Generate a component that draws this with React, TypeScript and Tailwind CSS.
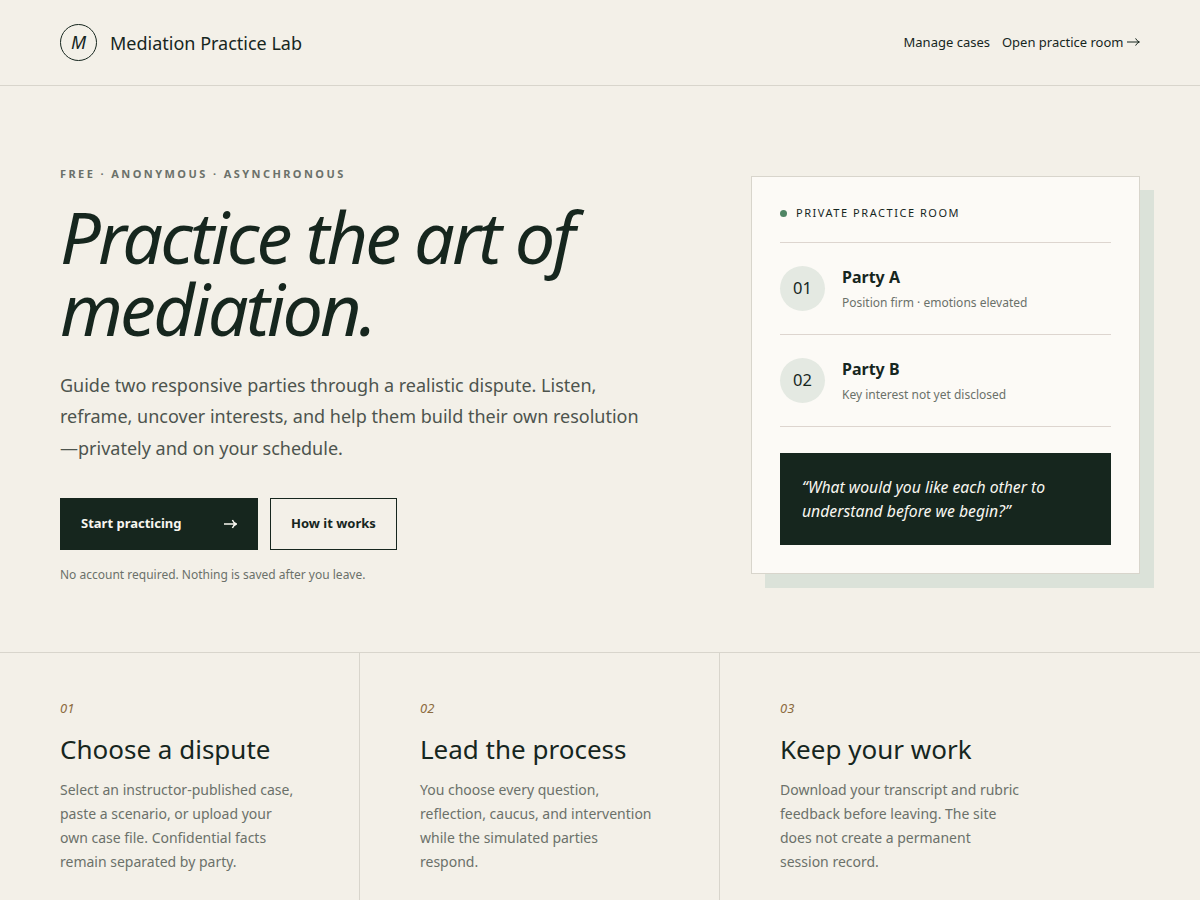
import React from "react";

const font = { fontFamily: '"Noto Sans", sans-serif' };

function NavArrow() {
  return (
    <svg width="13" height="10" viewBox="0 0 13 10" fill="none" stroke="currentColor" strokeWidth="1" className="inline-block ml-[3.5px] align-[-0.5px]">
      <path d="M0 5H12.2M8.6 1.4Q9.6 3.9 12.4 5Q9.6 6.1 8.6 8.6" />
    </svg>
  );
}

function ButtonArrow() {
  return (
    <svg width="13" height="10" viewBox="0 0 13 10" fill="none" stroke="currentColor" strokeWidth="1.4">
      <path d="M0 5H12M8.4 1Q9.4 3.8 12.4 5Q9.4 6.2 8.4 9" />
    </svg>
  );
}

function Party({ n, name, note }: { n: string; name: string; note: string }) {
  return (
    <div className="flex items-center gap-[17px] border-b border-[#ddd5cf] h-[92px]">
      <div className="w-[45px] h-[45px] rounded-full bg-[#e4e9e2] flex items-center justify-center text-[16.5px] text-[#16261e]">{n}</div>
      <div className="-mt-[1px]">
        <div className="text-[16px] leading-[24px] font-bold text-[#16261e]">{name}</div>
        <div className="text-[12px] leading-[18px] mt-[5px] text-[#6b716a]">{note}</div>
      </div>
    </div>
  );
}

function Feature({ n, title, text, last }: { n: string; title: string; text: string[]; last?: boolean }) {
  return (
    <div className={`pl-[60px] pt-[45px] ${last ? "" : "border-r border-[#d8d5cc]"}`}>
      <div className="text-[13px] leading-[20px] italic text-[#8c6b3f]">{n}</div>
      <h3 className="mt-[13px] text-[26px] leading-[36px] font-normal text-[#16261e]">{title}</h3>
      <p className="mt-[11px] text-[14px] leading-[24px] text-[#6b716a]">
        {text.map((t) => (
          <span key={t} className="block">{t}</span>
        ))}
      </p>
    </div>
  );
}

export default function App() {
  return (
    <div style={font} className="w-[1200px] h-[900px] overflow-hidden bg-[#f3f0e8] text-[#16261e]">
      <header className="h-[86px] border-b border-[#d8d5cc] px-[60px] flex items-center justify-between">
        <div className="flex items-center gap-[13px]">
          <div className="w-[37px] h-[37px] rounded-full border border-[#16261e] flex items-center justify-center text-[18px] italic">M</div>
          <span className="text-[18px] leading-[24px] pt-[1px]">Mediation Practice Lab</span>
        </div>
        <nav className="flex items-center gap-[12px] text-[13px]">
          <span>Manage cases</span>
          <span>Open practice room<NavArrow /></span>
        </nav>
      </header>

      <section className="h-[566px] px-[60px] flex justify-between">
        <div className="w-[600px] pt-[79px]">
          <div className="text-[11px] leading-[18px] font-bold tracking-[0.22em] text-[#6b716a]">FREE · ANONYMOUS · ASYNCHRONOUS</div>
          <h1 className="mt-[17px] text-[72px] leading-[72px] italic font-normal tracking-[-0.04em] text-[#16261e]">
            Practice the art of<br />mediation.
          </h1>
          <p className="mt-[25.8px] text-[18px] leading-[31.5px] text-[#4d544e] w-[580px]">
            Guide two responsive parties through a realistic dispute. Listen, reframe, uncover interests, and help them build their own resolution—privately and on your schedule.
          </p>
          <div className="mt-[33.5px] flex gap-[12px]">
            <div className="w-[198px] h-[52px] bg-[#16261e] text-[#f8f6f0] px-[21px] flex items-center justify-between text-[13px] font-bold">
              <span>Start practicing</span>
              <ButtonArrow />
            </div>
            <div className="h-[52px] px-[20px] border border-[#16261e] flex items-center text-[13px] font-bold">How it works</div>
          </div>
          <div className="mt-[16px] text-[12px] leading-[18px] text-[#6b716a]">No account required. Nothing is saved after you leave.</div>
        </div>

        <div className="w-[389px] h-[398px] mt-[90px] bg-[#fcfaf6] border border-[#d8d5cc] shadow-[14px_14px_0_#dbe2d9] px-[28px]">
          <div className="h-[66px] pt-[8px] border-b border-[#ddd5cf] flex items-center gap-[9px]">
            <span className="w-[7px] h-[7px] rounded-full bg-[#4f8564]" />
            <span className="text-[11px] tracking-[0.14em] text-[#16261e]">PRIVATE PRACTICE ROOM</span>
          </div>
          <Party n="01" name="Party A" note="Position firm · emotions elevated" />
          <Party n="02" name="Party B" note="Key interest not yet disclosed" />
          <div className="mt-[26px] h-[92px] bg-[#16261e] text-[#f8f6f0] px-[22px] flex items-center italic text-[15.75px] leading-[24px]">
            <span>“What would you like each other to understand before we begin?”</span>
          </div>
        </div>
      </section>

      <section className="h-[248px] border-t border-[#d8d5cc] grid grid-cols-[360px_360px_1fr]">
        <Feature n="01" title="Choose a dispute" text={["Select an instructor-published case,", "paste a scenario, or upload your", "own case file. Confidential facts", "remain separated by party."]} />
        <Feature n="02" title="Lead the process" text={["You choose every question,", "reflection, caucus, and intervention", "while the simulated parties", "respond."]} />
        <Feature last n="03" title="Keep your work" text={["Download your transcript and rubric", "feedback before leaving. The site", "does not create a permanent", "session record."]} />
      </section>
    </div>
  );
}
